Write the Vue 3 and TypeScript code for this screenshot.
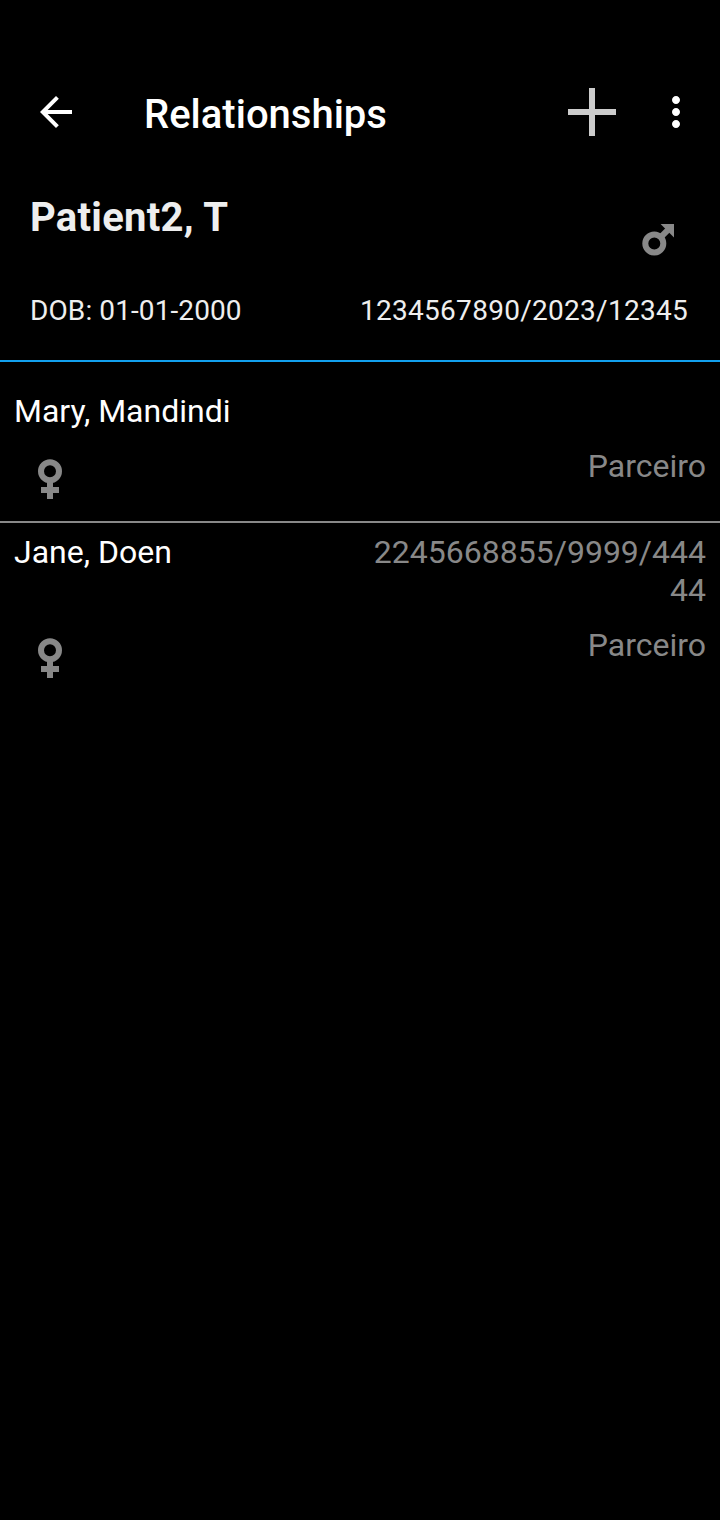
<script setup lang="ts">
interface Relationship {
  id: number
  name: string
  idLines: string[]
  relation: string
}

const patient = {
  name: 'Patient2, T',
  dob: 'DOB: 01-01-2000',
  nid: '1234567890/2023/12345',
}

const relationships: Relationship[] = [
  { id: 1, name: 'Mary, Mandindi', idLines: [], relation: 'Parceiro' },
  { id: 2, name: 'Jane, Doen', idLines: ['2245668855/9999/444', '44'], relation: 'Parceiro' },
]
</script>

<template>
  <div class="screen">
    <header class="toolbar">
      <svg class="back" viewBox="0 0 24 24" aria-label="Back">
        <path fill="#fff" d="M20 11H7.83l5.59-5.59L12 4l-8 8 8 8 1.41-1.41L7.83 13H20v-2z" />
      </svg>
      <h1 class="title">Relationships</h1>
      <svg class="add" viewBox="0 0 48 48" aria-label="Add">
        <path fill="#ccc" d="M21 0h6v21h21v6H27v21h-6V27H0v-6h21z" />
      </svg>
      <svg class="more" viewBox="0 0 24 24" aria-label="More">
        <path fill="#fff" d="M12 8c1.1 0 2-.9 2-2s-.9-2-2-2-2 .9-2 2 .9 2 2 2zm0 2c-1.1 0-2 .9-2 2s.9 2 2 2 2-.9 2-2-.9-2-2-2zm0 6c-1.1 0-2 .9-2 2s.9 2 2 2 2-.9 2-2-.9-2-2-2z" />
      </svg>
    </header>

    <section class="patient">
      <div class="patient-top">
        <h2 class="patient-name">{{ patient.name }}</h2>
        <svg class="male" viewBox="0 0 32 32" aria-label="Male">
          <circle cx="12.3" cy="19.5" r="9" fill="none" stroke="#888" stroke-width="6" />
          <path d="M17.5 14.3L26 5.8" stroke="#888" stroke-width="6" />
          <path d="M18.6 0H32v13.4z" fill="#888" />
        </svg>
      </div>
      <div class="patient-info">
        <span class="patient-dob">{{ patient.dob }}</span>
        <span class="patient-nid">{{ patient.nid }}</span>
      </div>
    </section>

    <main class="list">
      <article v-for="person in relationships" :key="person.id" class="row">
        <div class="line">
          <span class="name">{{ person.name }}</span>
          <div class="nid">
            <div v-for="part in person.idLines" :key="part">{{ part }}</div>
          </div>
        </div>
        <div class="line details">
          <svg class="female" viewBox="0 0 24 40" aria-label="Female">
            <circle cx="12" cy="12.2" r="9" fill="none" stroke="#888" stroke-width="6" />
            <path d="M9 22.5h6V28h6v6h-6v6H9v-6H3v-6h6z" fill="#888" />
          </svg>
          <span class="relation">{{ person.relation }}</span>
        </div>
      </article>
    </main>
  </div>
</template>

<style>
body {
  background: #000;
}
</style>

<style scoped>
.screen {
  box-sizing: border-box;
  width: 720px;
  height: 1520px;
  padding-top: 56px;
  background: #000;
  color: #fff;
  font-family: Roboto, 'Noto Sans', sans-serif;
  overflow: hidden;
}

.toolbar {
  display: flex;
  align-items: center;
  height: 112px;
  padding: 0 20px 0 32px;
}

svg {
  display: block;
  flex: none;
}

.back {
  width: 48px;
  height: 48px;
}

.title {
  flex: 1;
  margin: 6px 0 0 64px;
  font-size: 40px;
  line-height: 48px;
  font-weight: 500;
}

.add {
  width: 48px;
  height: 48px;
  margin-right: 36px;
}

.more {
  width: 48px;
  height: 48px;
}

.patient {
  box-sizing: border-box;
  height: 194px;
  padding: 27px 32px 0 30px;
  border-bottom: 2px solid #12a0ee;
  color: #eee;
}

.patient-top {
  display: flex;
  justify-content: space-between;
  height: 99px;
  padding-right: 14px;
}

.patient-name {
  margin: 0;
  font-size: 40px;
  line-height: 46px;
  font-weight: 700;
  letter-spacing: 0.28px;
}

.male {
  width: 32px;
  height: 32px;
  margin-top: 29px;
}

.patient-info {
  display: flex;
  justify-content: space-between;
  font-size: 28px;
  line-height: 33px;
}

.patient-dob {
  letter-spacing: 0.1px;
}

.patient-nid {
  letter-spacing: 0.28px;
}

.list {
  padding-top: 20px;
}

.row {
  padding: 10px 14px 22px;
  font-size: 32px;
  line-height: 38px;
}

.row + .row {
  border-top: 2px solid #888;
}

.line {
  display: flex;
  justify-content: space-between;
}

.nid,
.relation {
  color: #888;
  text-align: right;
}

.details {
  margin-top: 17px;
  padding-left: 24px;
}

.female {
  width: 24px;
  height: 40px;
  margin-top: 12px;
}
</style>
